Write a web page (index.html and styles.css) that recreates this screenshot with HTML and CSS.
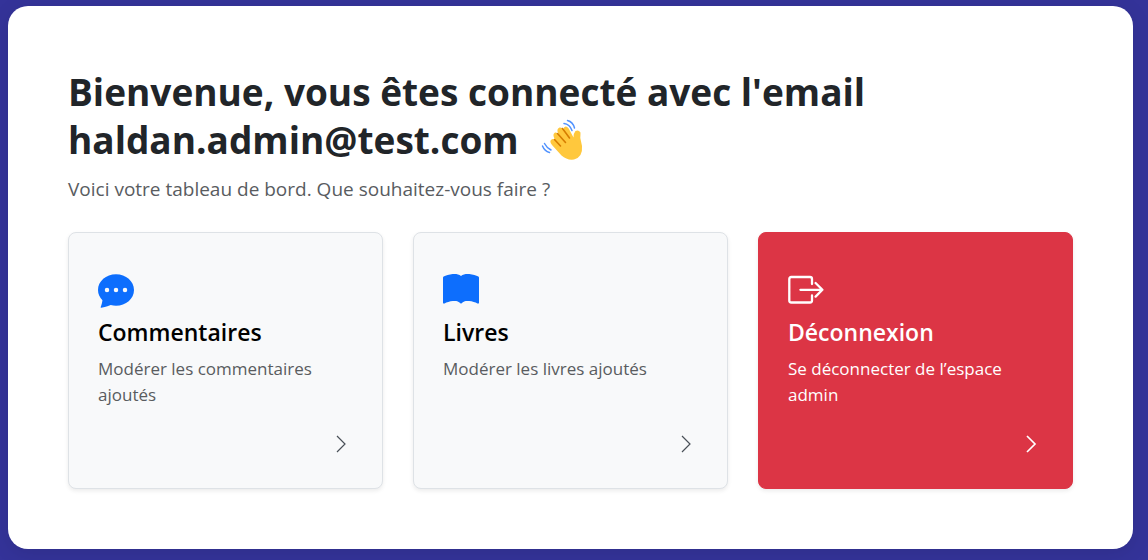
FILE: index.html
```html
<!DOCTYPE html>
<html lang="fr">
<head>
<meta charset="utf-8">
<meta name="viewport" content="width=device-width, initial-scale=1">
<title>Tableau de bord</title>
<link rel="stylesheet" href="styles.css">
</head>
<body>
<main class="dashboard">
  <h1 class="title">Bienvenue, vous êtes connecté avec l'email haldan.admin@test.com
    <svg class="wave" viewBox="0 0 42 42" aria-hidden="true">
      <path fill="#ffc83d" d="M11 26Q8 22 10.500 20.500Q12 19.500 14 21L13 18.500Q11.500 15 14 13.500Q16 13 17.500 15L16.500 12.500Q16 9.500 18.500 8.500Q20.500 8 22.500 10.500Q22.500 8 24.500 7.500Q27 7.500 28.500 11L32.500 18.500Q32.500 14 34.500 12Q37.500 10.500 39.500 13.500Q39.500 16 39.300 19L41 27Q42 38 33 40.500Q26 41.500 20.500 36.500Z"/>
      <path fill="none" stroke="#d67d00" stroke-width="1.600" stroke-linecap="round" d="M13.500 20.500l6 6.500M16.500 14.500l8 9M21.500 9.500l7 9.500"/>
      <path fill="none" stroke="#5092ff" stroke-width="1.500" stroke-linecap="round" d="M23 4.500Q28.500 5 31 11.500M26.500 1.500Q32 3 33.500 9M3.500 24.500Q5.500 28.500 10 31M1.500 27Q3.500 32 8.500 33.500"/>
    </svg>
  </h1>
  <p class="lead">Voici votre tableau de bord. Que souhaitez-vous faire ?</p>
  <nav class="cards" aria-label="Tableau de bord">
    <a class="card" href="#commentaires">
      <svg class="icon" viewBox="0 0 16 16" aria-hidden="true"><path fill="currentColor" d="M16 8c0 3.866-3.582 7-8 7a9 9 0 0 1-2.347-.306c-.584.296-1.925.864-4.181 1.234-.2.032-.352-.176-.273-.362.354-.836.674-1.950.770-2.966C.744 11.370 0 9.760 0 8c0-3.866 3.582-7 8-7s8 3.134 8 7M5 8a1 1 0 1 0-2 0 1 1 0 0 0 2 0m4 0a1 1 0 1 0-2 0 1 1 0 0 0 2 0m3 1a1 1 0 1 0 0-2 1 1 0 0 0 0 2"/></svg>
      <h2 class="card-title">Commentaires</h2>
      <p class="card-text">Modérer les commentaires ajoutés</p>
      <svg class="chevron" viewBox="0 0 20 20" aria-hidden="true"><path d="M6 2l8 8-8 8"/></svg>
    </a>
    <a class="card" href="#livres">
      <svg class="icon" viewBox="0 0 16 16" aria-hidden="true"><path fill="currentColor" d="M8 1.783C7.015.936 5.587.810 4.287.940c-1.514.153-3.042.672-3.994 1.105A.5.5 0 0 0 0 2.500v11a.5.5 0 0 0 .707.455c.882-.4 2.303-.881 3.680-1.020 1.409-.142 2.590.087 3.223.877a.5.5 0 0 0 .780 0c.633-.790 1.814-1.019 3.222-.877 1.378.139 2.800.620 3.681 1.020A.5.5 0 0 0 16 13.500v-11a.5.5 0 0 0-.293-.455c-.952-.433-2.480-.952-3.994-1.105C10.413.809 8.985.936 8 1.783"/></svg>
      <h2 class="card-title">Livres</h2>
      <p class="card-text">Modérer les livres ajoutés</p>
      <svg class="chevron" viewBox="0 0 20 20" aria-hidden="true"><path d="M6 2l8 8-8 8"/></svg>
    </a>
    <a class="card card-danger" href="#deconnexion">
      <svg class="icon" viewBox="0 0 36 36" aria-hidden="true"><path fill="none" stroke="currentColor" stroke-width="2.300" stroke-linecap="round" stroke-linejoin="round" d="M24 12V7q0-2-2-2H3.300q-2 0-2 2v21.500q0 2 2 2H22q2 0 2-2V23.500M12.400 17.800h22M27.600 11l6.800 6.800-6.800 6.800"/></svg>
      <h2 class="card-title">Déconnexion</h2>
      <p class="card-text">Se déconnecter de l’espace admin</p>
      <svg class="chevron" viewBox="0 0 20 20" aria-hidden="true"><path d="M6 2l8 8-8 8"/></svg>
    </a>
  </nav>
</main>
</body>
</html>
```
FILE: styles.css
```css
* {
  box-sizing: border-box;
}

body {
  margin: 0;
  padding: 6px 15px 11px 8px;
  background: #343399;
  color: #212529;
  font-family: "Segoe UI", "Open Sans", "Noto Sans", sans-serif;
}

.dashboard {
  padding: 62px 60px 60px;
  border-radius: 20px;
  background: #fff;
  box-shadow: 0 4px 20px rgba(0, 0, 0, 0.1);
}

.title {
  margin: 0 0 10px;
  font-size: 37px;
  font-weight: 700;
  line-height: 48px;
}

.wave {
  width: 42px;
  height: 42px;
  margin-left: 13px;
  vertical-align: -7px;
}

.lead {
  margin: 0 0 28px;
  color: #595c5f;
  font-size: 19px;
  line-height: 30px;
}

.cards {
  display: grid;
  grid-template-columns: repeat(3, 1fr);
  gap: 30px;
}

.card {
  display: flex;
  flex-direction: column;
  padding: 39px 29px 34px;
  border: 1px solid #dee2e6;
  border-radius: 8px;
  background: #f8f9fa;
  box-shadow: 0 2px 4px rgba(0, 0, 0, 0.08);
  color: #000;
  text-decoration: none;
}

.card-danger {
  border-color: #dc3545;
  background: #dc3545;
  color: #fff;
}

.icon {
  width: 36px;
  height: 36px;
  color: #0d6efd;
}

.card-title {
  margin: 8px 0;
  font-size: 23px;
  font-weight: 600;
  line-height: 32px;
}

.card-text {
  margin: 0 0 26px;
  color: #595c5f;
  font-size: 17px;
  line-height: 26px;
}

.chevron {
  width: 20px;
  height: 20px;
  margin: auto 2px 0 auto;
  fill: none;
  stroke: #495057;
  stroke-width: 1.2;
}

.card-danger .icon,
.card-danger .card-text {
  color: #fff;
}

.card-danger .chevron {
  stroke: #fff;
  stroke-width: 1.7;
}
```
